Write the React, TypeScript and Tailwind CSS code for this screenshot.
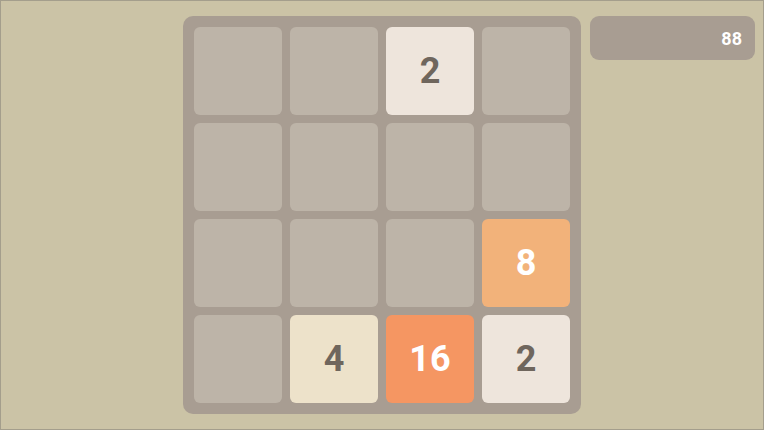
const board = [
  [0, 0, 2, 0],
  [0, 0, 0, 0],
  [0, 0, 0, 8],
  [0, 4, 16, 2],
]

const tileStyle: Record<number, string> = {
  0: 'bg-[#bdb4a8]',
  2: 'bg-[#eee5dc] text-[#6f665d]',
  4: 'bg-[#ede2ca] text-[#6f665d]',
  8: 'bg-[#f2b27a] text-white',
  16: 'bg-[#f59662] text-white',
}

export default function App() {
  return (
    <div
      className="w-[764px] h-[430px] bg-[#cbc3a6] border border-[#a49e8c] grid grid-cols-[1fr_auto_1fr] pt-[15px]"
      style={{ fontFamily: 'Roboto, "Liberation Sans", sans-serif' }}
    >
      <div />
      <div className="w-[398px] h-[398px] rounded-[10px] bg-[#a89d92] p-[11px] grid grid-cols-4 grid-rows-4 gap-[8px]">
        {board.flat().map((v, i) => (
          <div
            key={i}
            className={`rounded-[6px] flex items-center justify-center text-[36px] font-bold ${tileStyle[v]}`}
          >
            {v > 0 ? v : ''}
          </div>
        ))}
      </div>
      <div className="pl-[9px] pr-[8px]">
        <div className="h-[44px] rounded-[9px] bg-[#a89d92] flex items-center justify-end pr-[13px] text-white font-bold text-[18px]">
          88
        </div>
      </div>
    </div>
  )
}
